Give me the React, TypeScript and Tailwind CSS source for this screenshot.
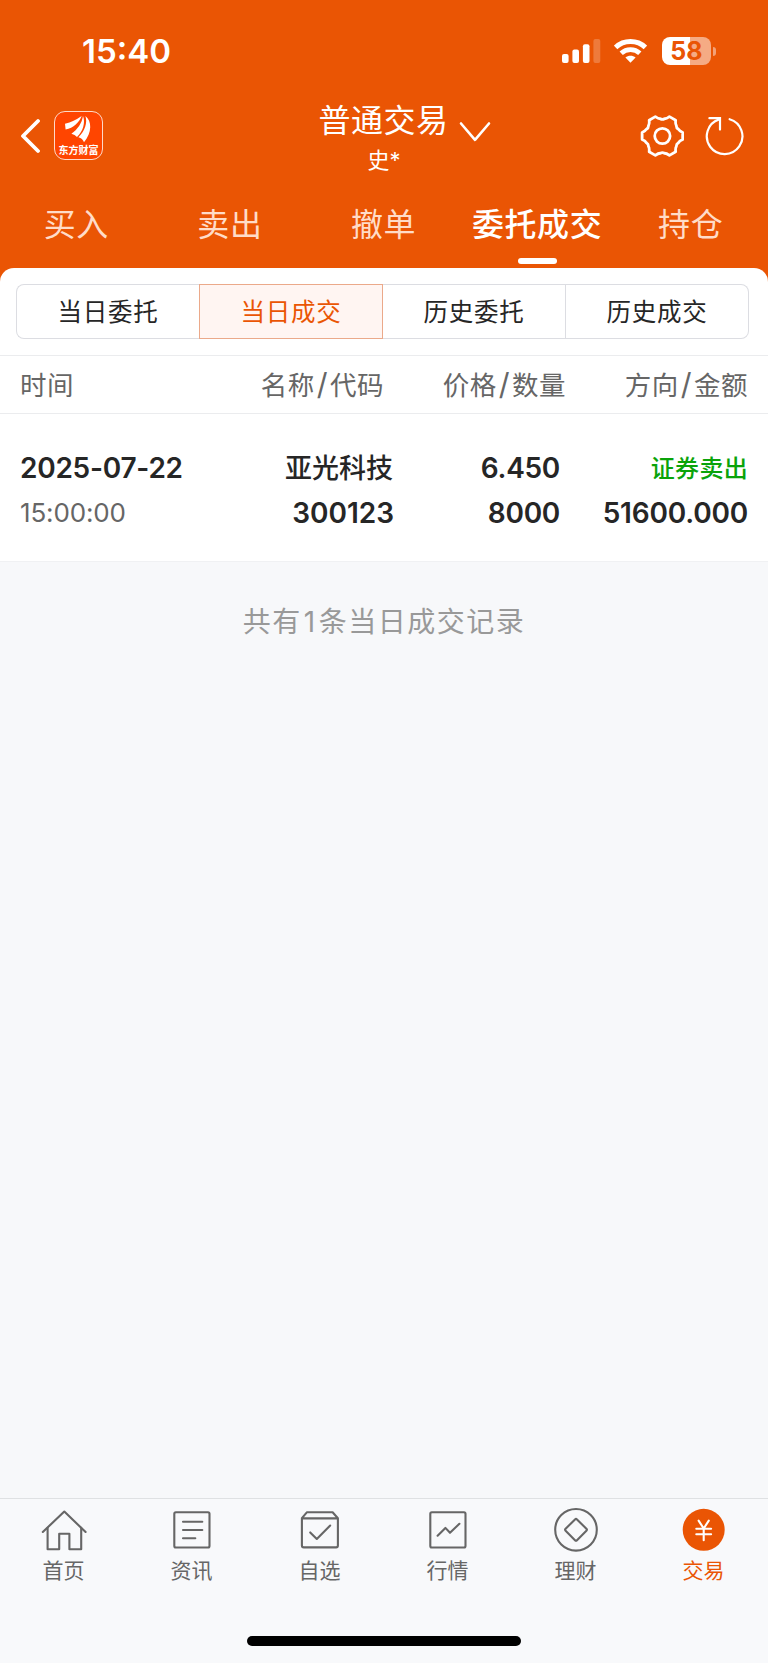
import type { ReactNode } from "react";
import clsx from "clsx";

const tabs = ["买入", "卖出", "撤单", "委托成交", "持仓"];
const segments = ["当日委托", "当日成交", "历史委托", "历史成交"];

const trades = [
  {
    date: "2025-07-22",
    time: "15:00:00",
    name: "亚光科技",
    code: "300123",
    price: "6.450",
    quantity: "8000",
    side: "证券卖出",
    amount: "51600.000",
  },
];

// Six rounded teeth, with a shallow dip between each pair
function gearPath(cx: number, cy: number) {
  const at = (deg: number, r: number) => {
    const a = (deg * Math.PI) / 180;
    return `${(cx + r * Math.cos(a)).toFixed(2)} ${(cy + r * Math.sin(a)).toFixed(2)}`;
  };
  let d = `M${at(-10, 20.6)}`;
  for (let deg = 0; deg < 360; deg += 60) {
    d += `L${at(deg + 10, 20.6)}Q${at(deg + 17, 17.6)} ${at(deg + 23, 17.4)}Q${at(deg + 30, 16)} ${at(deg + 37, 17.4)}Q${at(deg + 43, 17.6)} ${at(deg + 50, 20.6)}`;
  }
  return d + "Z";
}

function StatusBar() {
  return (
    <div className="flex h-[102px] items-center pl-[82px] pr-[52px] text-white">
      <span className="pt-px text-[33px] font-semibold leading-none">15:40</span>
      <svg className="ml-auto" width="39" height="24" viewBox="0 0 39 24" fill="currentColor">
        <rect x="0" y="15" width="6.6" height="9" rx="2" />
        <rect x="10.4" y="10.5" width="6.6" height="13.5" rx="2" />
        <rect x="20.9" y="5.2" width="6.6" height="18.8" rx="2" />
        <rect x="31.4" y="0" width="6.9" height="24" rx="2" opacity="0.22" />
      </svg>
      <svg className="ml-[13px]" width="33" height="24" viewBox="0 0 33 24" fill="none" stroke="currentColor">
        <path d="M1.6 8.4C9.8 .6 23.2 .6 31.4 8.4" strokeWidth="5" />
        <path d="M7.2 14.2C12.4 9.4 20.6 9.4 25.8 14.2" strokeWidth="4.8" />
        <path d="M11.4 18.6C14.3 16 18.7 16 21.6 18.6L16.5 23.8Z" fill="currentColor" stroke="none" />
      </svg>
      <div className="ml-[15px] flex items-center">
        <div className="flex h-[28px] w-[49px] items-center justify-center rounded-[8px] bg-[linear-gradient(90deg,#fff_58%,#f5ab84_58%)] pt-px text-[25px] font-bold leading-none text-[#ea5504]">
          58
        </div>
        <div className="ml-[2px] h-[9px] w-[3px] rounded-r-full bg-[#f3a177]" />
      </div>
    </div>
  );
}

function AppLogo() {
  return (
    <div className="mb-px ml-[14px] flex h-[49px] w-[49px] flex-col items-center rounded-[11px] border border-[#ffd9c8] bg-[#ff4500] text-white">
      <svg className="shrink-0" width="47" height="31" viewBox="0 0 47 31" fill="currentColor">
        <path d="M10 11.8Q19 9.5 26.6 4C24.5 10 18.5 16 10.6 17.6Z" />
        <path d="M16.4 21.8C22.5 17.5 27 11 28 4C30.6 10.5 28 19.5 22 25Q20 22.6 16.4 21.8Z" />
        <path d="M30.4 4C37 9 37.2 20.5 29 30.2Q27.6 26.4 23.4 25.2C30 19 32.6 10.5 30.4 4Z" />
      </svg>
      <span className="mt-px whitespace-nowrap text-[10px] font-bold leading-[12px]">东方财富</span>
    </div>
  );
}

function TitleBar() {
  return (
    <div className="flex h-[68px] items-center pr-[22px] text-white">
      <div className="flex w-[319px] items-center pl-[20px]">
        <svg width="20" height="36" viewBox="0 0 20 36" fill="none" stroke="currentColor" strokeWidth="3.8" strokeLinecap="round" strokeLinejoin="round">
          <path d="M18 3L3 18L18 33" />
        </svg>
        <AppLogo />
      </div>
      <div className="flex w-[128px] flex-col items-center pt-[2px]">
        <span className="whitespace-nowrap pl-px text-[32px] leading-[34px] tracking-[0.5px]">普通交易</span>
        <span className="mt-[11px] whitespace-nowrap pl-[2px] text-[22px] leading-[22px]">史*</span>
      </div>
      <svg className="mb-[9px] ml-[12px]" width="32" height="22" viewBox="0 0 32 22" fill="none" stroke="currentColor" strokeWidth="2.6" strokeLinecap="round" strokeLinejoin="round">
        <path d="M2 2.5L16 18.8L30 2.5" />
      </svg>
      <svg className="ml-auto" width="44" height="44" viewBox="0 0 44 44" fill="none" stroke="currentColor" strokeWidth="2.8" strokeLinejoin="round">
        <path d={gearPath(22.4, 22)} />
        <circle cx="22.4" cy="22" r="7.7" />
      </svg>
      <svg className="ml-[20px]" width="42" height="42" viewBox="0 0 42 42" fill="none" stroke="currentColor" strokeWidth="2.2" strokeLinecap="round">
        <path d="M25.6 4.2A17.8 17.8 0 1 1 15 4.4" />
        <path d="M5.4 3.2H16V14.6" />
      </svg>
    </div>
  );
}

function TradeTabs() {
  return (
    <div className="grid h-[98px] grid-cols-5">
      {tabs.map((tab) => {
        const active = tab === "委托成交";
        return (
          <div key={tab} className="flex flex-col items-center pt-[39px]">
            <span
              className={clsx(
                "mr-px whitespace-nowrap text-[32px] leading-[32px] tracking-[0.6px]",
                active ? "font-medium text-white" : "text-[#ffdcc8]"
              )}
            >
              {tab}
            </span>
            {active && <div className="mt-[17px] h-[6px] w-[39px] rounded-full bg-white" />}
          </div>
        );
      })}
    </div>
  );
}

function SegmentedControl() {
  return (
    <div className="flex h-[87px] py-[16px] pl-[16px] pr-[19px]">
      {segments.map((label, i) => (
        <div
          key={label}
          className={clsx(
            "flex flex-1 items-center justify-center border pt-[2px] text-[24.5px] tracking-[0.7px]",
            i === 0 && "rounded-l-[8px] border-r-0",
            i === 2 && "border-l-0",
            i === 3 && "rounded-r-[8px] border-l-0",
            i === 1
              ? "border-[#eba98a] bg-[#fff5f2] text-[#ea5504]"
              : "border-[#dcdde2] text-[#262626]"
          )}
        >
          {label}
        </div>
      ))}
    </div>
  );
}

function ColumnTitle({ first, second }: { first: string; second: string }) {
  return (
    <>
      {first}
      <span className="mx-[2px] text-[30px] leading-none">/</span>
      {second}
    </>
  );
}

function TradeTable() {
  return (
    <>
      <div className="flex h-[59px] items-center border-y border-[#ebecee] px-[20px] pt-px text-[26.5px] leading-[40px] tracking-[0.5px] text-[#666]">
        <span className="w-[130px]">时间</span>
        <span className="w-[234px] text-right">
          <ColumnTitle first="名称" second="代码" />
        </span>
        <span className="w-[182px] text-right">
          <ColumnTitle first="价格" second="数量" />
        </span>
        <span className="flex-1 text-right">
          <ColumnTitle first="方向" second="金额" />
        </span>
      </div>
      {trades.map((t) => (
        <div
          key={t.code}
          className="flex h-[148px] border-b border-[#f0f1f3] pl-[20px] pr-[20px] pt-[38px] text-[28px] font-semibold leading-[32px] text-[#262626]"
        >
          <div className="flex w-[180px] flex-col gap-[13px]">
            <span className="whitespace-nowrap tracking-[-0.25px]">{t.date}</span>
            <span className="text-[26px] font-normal tracking-[-0.15px] text-[#666]">{t.time}</span>
          </div>
          <div className="flex w-[194px] flex-col gap-[13px] text-right">
            <span className="relative top-px pr-px text-[27px] font-medium">{t.name}</span>
            <span>{t.code}</span>
          </div>
          <div className="flex w-[166px] flex-col gap-[13px] text-right tracking-[-0.3px]">
            <span>{t.price}</span>
            <span>{t.quantity}</span>
          </div>
          <div className="flex flex-1 flex-col gap-[13px] text-right tracking-[-0.2px]">
            <span className="relative top-px text-[24px] font-medium tracking-[0.3px] text-[#0aa30a]">{t.side}</span>
            <span>{t.amount}</span>
          </div>
        </div>
      ))}
    </>
  );
}

const navItems: { label: string; icon: ReactNode; active?: boolean }[] = [
  {
    label: "首页",
    icon: (
      <>
        <path d="M1.8 25L23.3 4.6L44.6 25" />
        <path d="M6.6 20.8V42.3H18.2V26.8H28.4V42.3H40.2V20.8" />
      </>
    ),
  },
  {
    label: "资讯",
    icon: (
      <>
        <rect x="5.3" y="5.3" width="35.2" height="35.2" rx="1.5" />
        <path d="M14 14.7H33.3M14 23H33.3M14 31.2H26.3" />
      </>
    ),
  },
  {
    label: "自选",
    icon: (
      <>
        <path d="M4.9 11.2L9.8 5.3H35.6L40.9 11.2V38.6Q40.9 40.4 39.1 40.4H6.7Q4.9 40.4 4.9 38.6ZM4.9 11.4H40.9" />
        <path d="M13.2 25.4L19.8 32L33.2 18.6" />
      </>
    ),
  },
  {
    label: "行情",
    icon: (
      <>
        <rect x="5.3" y="5.3" width="35.2" height="35.2" rx="1.5" />
        <path d="M12.6 28.7L20.4 20.9L25 25.8L34.4 16.8" />
      </>
    ),
  },
  {
    label: "理财",
    icon: (
      <>
        <circle cx="23" cy="22.8" r="20.8" />
        <path d="M22 12.4Q23 11.4 24 12.4L33.4 21.8Q34.4 22.8 33.4 23.8L24 33.2Q23 34.2 22 33.2L12.6 23.8Q11.6 22.8 12.6 21.8Z" />
      </>
    ),
  },
  {
    label: "交易",
    active: true,
    icon: (
      <>
        <circle cx="22.7" cy="22.8" r="21" fill="#ea5504" stroke="none" />
        <path d="M17.6 13.6L22.7 21.5L27.8 13.6M22.7 21.5V33.2M15.3 21.8H30.1M15.3 27.2H30.1" stroke="#fff" />
      </>
    ),
  },
];

function BottomNav() {
  return (
    <nav className="flex h-[165px] flex-col items-center border-t border-[#dfe1e3] bg-[#f8f9fb]">
      <div className="grid w-full grid-cols-6">
        {navItems.map(({ label, icon, active }) => (
          <div
            key={label}
            className={clsx("flex flex-col items-center pt-[8px]", active ? "text-[#ea5504]" : "text-[#666]")}
          >
            <svg width="46" height="46" viewBox="0 0 46 46" fill="none" stroke="currentColor" strokeWidth="2.1" strokeLinecap="round" strokeLinejoin="round">
              {icon}
            </svg>
            <span className="mr-px mt-[7px] text-[21px] leading-[22px]">{label}</span>
          </div>
        ))}
      </div>
      <div className="mb-[17px] mt-auto h-[10px] w-[274px] rounded-full bg-black" />
    </nav>
  );
}

export default function App() {
  return (
    <div className="flex h-[1663px] w-[768px] flex-col bg-[#f7f8fa] font-['Inter','Noto_Sans_CJK_SC',sans-serif]">
      <div className="bg-[#ea5504]">
        <StatusBar />
        <TitleBar />
        <TradeTabs />
        <div className="rounded-t-[14px] bg-white">
          <SegmentedControl />
          <TradeTable />
        </div>
      </div>
      <p className="flex-1 pt-[44px] text-center text-[28px] leading-[32px] tracking-[1.5px] text-[#999]">
        共有<span className="mx-[2px]">1</span>条当日成交记录
      </p>
      <BottomNav />
    </div>
  );
}
